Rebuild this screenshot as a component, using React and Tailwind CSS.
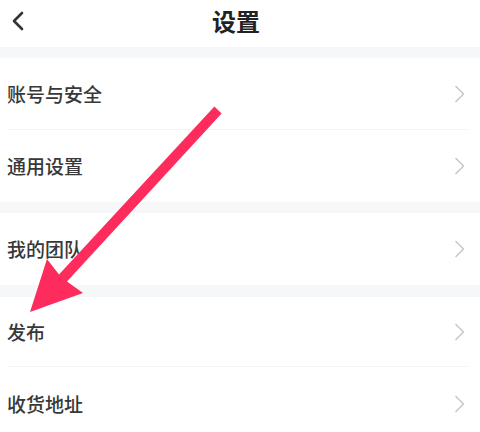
import React from 'react';

const Chevron = () => (
  <svg width="12" height="18" viewBox="0 0 12 18" fill="none" className="shrink-0">
    <path d="M2 1.5 L9.5 9 L2 16.5" stroke="#c8c8c8" strokeWidth="1.6" strokeLinecap="round" strokeLinejoin="round" />
  </svg>
);

const Row = ({ label, divider, h = 'h-[72px]' }) => (
  <div className={`relative flex items-center justify-between pl-[7px] pr-[14px] bg-white ${h}`}>
    <span className="text-[19px] font-medium text-[#383838]">{label}</span>
    <Chevron />
    {divider && <div className="absolute left-[7px] right-[13px] bottom-0 h-px bg-[#f2f3f5]" />}
  </div>
);

const Band = ({ h }) => <div className={`bg-[#f6f7f9] ${h}`} />;

export default function App() {
  return (
    <div
      className="relative w-[480px] h-[432px] overflow-hidden bg-white"
      style={{ fontFamily: '"Noto Sans CJK SC", "Noto Sans", sans-serif' }}
    >
      {/* header */}
      <div className="relative h-[47px] flex items-center justify-center pb-[6px]">
        <svg width="14" height="20" viewBox="0 0 14 20" fill="none" className="absolute left-[11px] top-[11px]">
          <path d="M11 2 L3 10 L11 18" stroke="#333333" strokeWidth="2.6" strokeLinecap="round" strokeLinejoin="round" />
        </svg>
        <h1 className="text-[24px] font-bold text-[#222222] ml-[-8px]">设置</h1>
      </div>

      <Band h="h-[11px]" />
      <Row label="账号与安全" divider />
      <Row label="通用设置" />
      <Band h="h-[11px]" />
      <Row label="我的团队" />
      <Band h="h-[12px]" />
      <Row label="发布" divider h="h-[70px]" />
      <Row label="收货地址" h="h-[74px]" />

      {/* arrow overlay */}
      <svg className="absolute left-0 top-0 pointer-events-none" width="480" height="432" viewBox="0 0 480 432">
        <polygon
          points="214.4,106.6 221.6,113.4 67,281.5 83,293 30,312 47,259 59,274.5"
          fill="#fe2c5c"
        />
      </svg>
    </div>
  );
}
